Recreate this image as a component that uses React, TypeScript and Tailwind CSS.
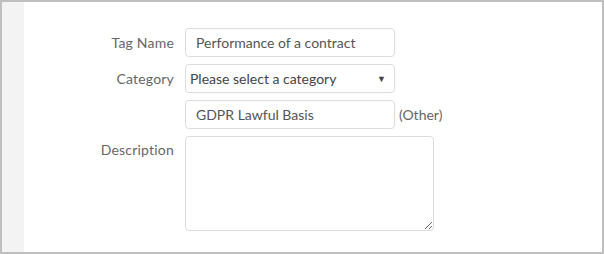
import React from "react";

export default function App() {
  const font = { fontFamily: "Lato, 'Open Sans', sans-serif" };
  return (
    <div className="w-[604px] h-[254px] border-2 border-[#bfbfbf] bg-white flex" style={font}>
      <div className="w-[22px] bg-[#f3f3f3] shrink-0" />
      <div className="flex-1 pt-[26px]">
        <div className="grid grid-cols-[150px_auto] gap-x-[11px] gap-y-[7px] items-start text-[14px] text-[#666]">
          <div className="h-[29px] flex items-center justify-end tracking-[0.2px]">Tag Name</div>
          <div className="h-[29px] w-[210px] border border-[#dcdcdc] rounded-[4px] flex items-center pl-[10px] text-[#555]">
            Performance of a contract
          </div>
          <div className="h-[29px] flex items-center justify-end tracking-[0.2px]">Category</div>
          <div className="h-[29px] w-[210px] border border-[#dcdcdc] rounded-[4px] flex items-center pl-[4px] pr-[8px] text-[#444] justify-between">
            <span>Please select a category</span>
            <span className="text-[9px] text-[#444]">▼</span>
          </div>
          <div className="h-[29px]" />
          <div className="flex items-center gap-[4px]">
            <div className="h-[29px] w-[210px] border border-[#dcdcdc] rounded-[4px] flex items-center pl-[10px] text-[#555]">
              GDPR Lawful Basis
            </div>
            <span className="text-[#666]">(Other)</span>
          </div>
          <div className="flex justify-end pt-[3px] tracking-[0.2px]">Description</div>
          <textarea className="h-[95px] w-[249px] border border-[#dcdcdc] rounded-[4px] outline-none resize-y" />
        </div>
      </div>
    </div>
  );
}
